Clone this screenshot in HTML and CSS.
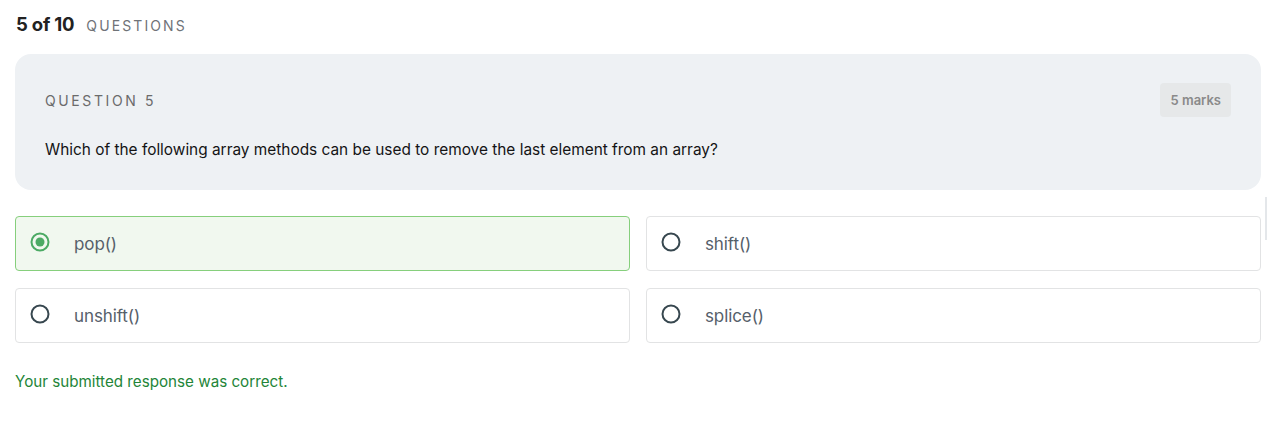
FILE: index.html
```html
<!DOCTYPE html>
<html>
<head>
<meta charset="utf-8">
<link rel="stylesheet" href="styles.css">
</head>
<body>
<div class="page">
  <div class="progress"><span class="count">5 of 10</span><span class="label">QUESTIONS</span></div>
  <div class="qcard">
    <div class="qhead">
      <span class="qnum">QUESTION 5</span>
      <span class="marks">5 marks</span>
    </div>
    <p class="qtext">Which of the following array methods can be used to remove the last element from an array?</p>
  </div>
  <div class="options">
    <div class="option selected">
      <svg class="radio" width="20" height="20" viewBox="0 0 20 20"><circle cx="10" cy="10" r="8.5" fill="none" stroke="#4caa64" stroke-width="2"/><circle cx="10" cy="10" r="4.5" fill="#4caa64"/></svg>
      <span class="otext">pop()</span>
    </div>
    <div class="option">
      <svg class="radio" width="20" height="20" viewBox="0 0 20 20"><circle cx="10" cy="10" r="8.5" fill="none" stroke="#37474f" stroke-width="2"/></svg>
      <span class="otext">shift()</span>
    </div>
    <div class="option">
      <svg class="radio" width="20" height="20" viewBox="0 0 20 20"><circle cx="10" cy="10" r="8.5" fill="none" stroke="#37474f" stroke-width="2"/></svg>
      <span class="otext">unshift()</span>
    </div>
    <div class="option">
      <svg class="radio" width="20" height="20" viewBox="0 0 20 20"><circle cx="10" cy="10" r="8.5" fill="none" stroke="#37474f" stroke-width="2"/></svg>
      <span class="otext">splice()</span>
    </div>
  </div>
  <p class="feedback">Your submitted response was correct.</p>
  <div class="edge"></div>
</div>
</body>
</html>
```

FILE: styles.css
```css
* { box-sizing: border-box; }
html, body { margin: 0; padding: 0; background: #fff; }
body { font-family: "Inter", "Noto Sans", sans-serif; color: #1a1a1a; }
.page { position: relative; padding: 13px 6px 0 15px; width: 1267px; height: 446px; }
.progress { display: flex; align-items: baseline; gap: 12px; height: 22px; padding-left: 1px; }
.count { font-size: 18.5px; font-weight: 700; color: #222; letter-spacing: -0.2px; }
.label { font-size: 14px; letter-spacing: 2.1px; color: #6f7378; }
.qcard { margin-top: 19px; background: #eef1f4; border-radius: 16px; padding: 29px 30px 0 30px; height: 136px; }
.qhead { display: flex; justify-content: space-between; align-items: center; }
.qnum { font-size: 14px; letter-spacing: 2.6px; color: #6b6b6b; }
.marks { background: #e6e8e9; border-radius: 4px; padding: 9px 10px; font-size: 13px; font-weight: 600; color: #8a8a8a; }
.qtext { margin: 23px 0 0; font-size: 15.4px; color: #141414; }
.options { margin-top: 26px; display: grid; grid-template-columns: 1fr 1fr; column-gap: 16px; row-gap: 17px; }
.option { display: flex; align-items: center; height: 55px; border: 1px solid #e2e3e4; border-radius: 4px; padding: 0 0 0 14px; gap: 24px; }
.option.selected { background: #f1f8ef; border-color: #86cf7c; }
.radio { flex: none; margin-top: -3px; }
.otext { font-size: 17px; color: #56606a; letter-spacing: -0.1px; }
.feedback { margin: 29px 0 0; font-size: 15.2px; color: #238538; }
.edge { position: absolute; left: 1265px; top: 197px; width: 2px; height: 43px; background: #e4e7ea; }
```
